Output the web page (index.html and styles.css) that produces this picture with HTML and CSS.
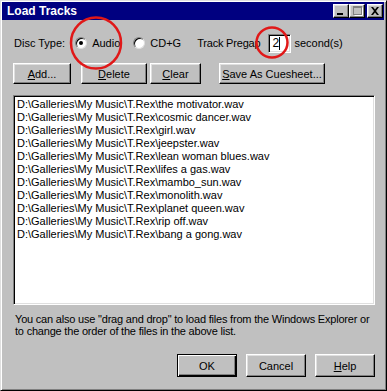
FILE: index.html
```html
<!DOCTYPE html>
<html lang="en">
<head>
  <meta charset="UTF-8" />
  <title>Load Tracks</title>
  <link rel="stylesheet" href="styles.css">
</head>
<body>
  <div class="ventana">
    <div class="titulo">
      <span class="titulo-texto">Load Tracks</span>
      <div class="titulo-botones">
        <span class="tbtn">
          <svg width="14" height="12" viewBox="0 0 14 12"><rect x="3" y="8" width="6" height="2" fill="#000"/></svg>
        </span>
        <span class="tbtn">
          <svg width="14" height="12" viewBox="0 0 14 12"><rect x="3.5" y="1.5" width="8" height="8" fill="none" stroke="#808080"/><rect x="3" y="1" width="9" height="2" fill="#808080"/><path d="M4.5 10.5h8v-8" fill="none" stroke="#fff"/></svg>
        </span>
        <span class="tbtn tbtn-cerrar">
          <svg width="14" height="12" viewBox="0 0 14 12"><path d="M3 2l2 0 2 2.5 2-2.5 2 0-3 4 3 4-2 0-2-2.5-2 2.5-2 0 3-4z" fill="#000"/></svg>
        </span>
      </div>
    </div>

    <div class="contenido">
      <div class="fila-disco">
        <span class="etiqueta">Disc Type:</span>
        <span class="radio radio-marcado"></span>
        <span class="opcion">Audio</span>
        <span class="radio radio-segundo"></span>
        <span class="opcion">CD+G</span>
        <span class="etiqueta-pregap">Track Pregap</span>
        <span class="campo">2<span class="cursor"></span></span>
        <span class="etiqueta-seg">second(s)</span>
      </div>

      <div class="fila-botones">
        <button class="boton btn-add"><u>A</u>dd...</button>
        <button class="boton btn-delete"><u>D</u>elete</button>
        <button class="boton btn-clear"><u>C</u>lear</button>
        <button class="boton btn-save"><u>S</u>ave As Cuesheet...</button>
      </div>

      <div class="lista">
        <div class="item">D:\Galleries\My Music\T.Rex\the motivator.wav</div>
        <div class="item">D:\Galleries\My Music\T.Rex\cosmic dancer.wav</div>
        <div class="item">D:\Galleries\My Music\T.Rex\girl.wav</div>
        <div class="item">D:\Galleries\My Music\T.Rex\jeepster.wav</div>
        <div class="item">D:\Galleries\My Music\T.Rex\lean woman blues.wav</div>
        <div class="item">D:\Galleries\My Music\T.Rex\lifes a gas.wav</div>
        <div class="item">D:\Galleries\My Music\T.Rex\mambo_sun.wav</div>
        <div class="item">D:\Galleries\My Music\T.Rex\monolith.wav</div>
        <div class="item">D:\Galleries\My Music\T.Rex\planet queen.wav</div>
        <div class="item">D:\Galleries\My Music\T.Rex\rip off.wav</div>
        <div class="item">D:\Galleries\My Music\T.Rex\bang a gong.wav</div>
      </div>

      <p class="ayuda">You can also use "drag and drop" to load files from the Windows Explorer or to change the order of the files in the above list.</p>

      <div class="fila-final">
        <button class="boton boton-final boton-defecto">OK</button>
        <button class="boton boton-final">Cancel</button>
        <button class="boton boton-final"><u>H</u>elp</button>
      </div>
    </div>

    <!-- marcas rojas encima de la captura -->
    <svg class="marcas" width="387" height="391" viewBox="0 0 387 391">
      <ellipse cx="95" cy="42" rx="25" ry="25.5" fill="none" stroke="#e01818" stroke-width="2.5"/>
      <ellipse cx="271" cy="41.5" rx="15.5" ry="15" fill="none" stroke="#e01818" stroke-width="2.5"/>
    </svg>
  </div>
</body>
</html>
```

FILE: styles.css
```css
body {
  margin: 0;
  padding: 0;
  background: #c0c0c0;
  font-family: 'Liberation Sans', Arial, sans-serif;
  font-size: 11px;
  color: #000;
}

.ventana {
  position: relative;
  width: 387px;
  height: 391px;
  box-sizing: border-box;
  background: #c0c0c0;
  border: 1px solid;
  border-color: #dfdfdf #000 #000 #dfdfdf;
  box-shadow: inset 1px 1px #fff, inset -1px -1px #808080;
  padding: 1px 2px 2px 1px;
}

.titulo {
  height: 18px;
  background: #000080;
  display: flex;
  align-items: center;
  justify-content: space-between;
  padding: 0 1px 0 5px;
}

.titulo-texto {
  color: #fff;
  font-weight: 700;
  font-size: 12px;
}

.titulo-botones {
  display: flex;
}

.tbtn {
  width: 16px;
  height: 14px;
  box-sizing: border-box;
  background: #c0c0c0;
  border: 1px solid;
  border-color: #fff #000 #000 #fff;
  box-shadow: inset -1px -1px #808080, inset 1px 1px #dfdfdf;
  display: flex;
  align-items: center;
  justify-content: center;
}

.tbtn svg {
  display: block;
}

.tbtn-cerrar {
  margin-left: 2px;
}

.contenido {
  padding: 0 9px 0 11px;
}

.fila-disco {
  display: flex;
  align-items: center;
  height: 20px;
  margin-top: 13px;
  padding-left: 1px;
}

.radio {
  width: 12px;
  height: 12px;
  box-sizing: border-box;
  border-radius: 50%;
  background: #fff;
  border: 1px solid;
  border-color: #808080 #dfdfdf #dfdfdf #808080;
  box-shadow: inset 1px 1px #000;
  position: relative;
  margin: 0 5px 0 10px;
}

.radio-marcado::after {
  content: "";
  position: absolute;
  left: 3px;
  top: 3px;
  width: 4px;
  height: 4px;
  border-radius: 50%;
  background: #000;
}

.radio-segundo {
  margin-left: 13px;
}

.etiqueta-pregap {
  margin-left: 16px;
  letter-spacing: -0.2px;
}

.campo {
  width: 23px;
  height: 19px;
  box-sizing: border-box;
  margin: 0 3px 0 8px;
  background: #fff;
  border: 1px solid;
  border-color: #808080 #fff #fff #808080;
  box-shadow: inset 1px 1px #000, inset -1px -1px #dfdfdf;
  padding-left: 3px;
  display: flex;
  align-items: center;
  font-size: 12px;
}

.cursor {
  width: 1px;
  height: 13px;
  background: #000;
}

.fila-botones {
  display: flex;
  margin-top: 10px;
}

.boton {
  height: 21px;
  box-sizing: border-box;
  background: #c0c0c0;
  border: 1px solid;
  border-color: #fff #000 #000 #fff;
  box-shadow: inset -1px -1px #808080, inset 1px 1px #dfdfdf;
  font-family: 'Liberation Sans', Arial, sans-serif;
  font-size: 11px;
  color: #000;
  padding: 0;
}

.btn-add { width: 58px; }
.btn-delete { width: 66px; margin-left: 10px; }
.btn-clear { width: 51px; margin-left: 3px; }
.btn-save { width: 106px; margin-left: 18px; }

.lista {
  height: 210px;
  margin-top: 11px;
  box-sizing: border-box;
  background: #fff;
  border: 1px solid;
  border-color: #808080 #fff #fff #808080;
  box-shadow: inset 1px 1px #000, inset -1px -1px #dfdfdf;
  padding: 2px 3px;
}

.item {
  height: 13px;
  line-height: 13px;
  white-space: nowrap;
}

.ayuda {
  margin: 8px 0 0 2px;
  line-height: 12px;
  letter-spacing: -0.2px;
}

.fila-final {
  display: flex;
  justify-content: flex-end;
  gap: 9px;
  margin-top: 17px;
}

.boton-final {
  width: 60px;
  height: 23px;
}

.boton-defecto {
  border-color: #000;
  box-shadow: inset 1px 1px #fff, inset -1px -1px #000, inset -2px -2px #808080;
}

.marcas {
  position: absolute;
  left: 0;
  top: 0;
  pointer-events: none;
}
```
